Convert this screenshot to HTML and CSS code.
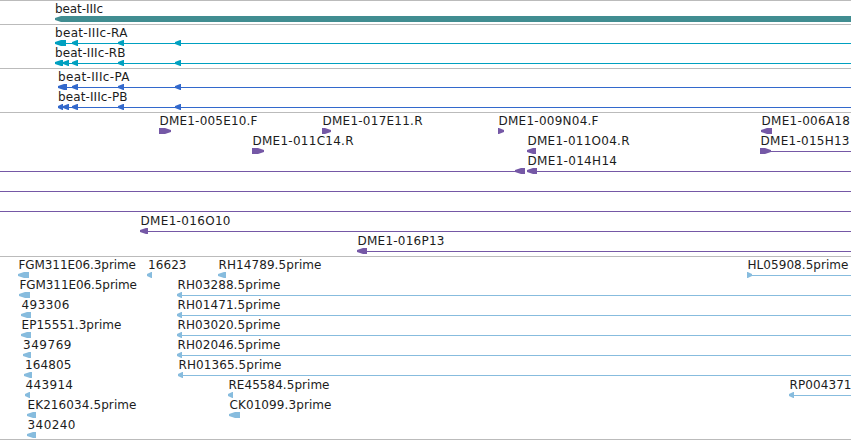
FILE: index.html
```
<!DOCTYPE html>
<html lang="en">
<head>
<meta charset="utf-8">
<title>Genome browser</title>
<link rel="stylesheet" href="styles.css">
</head>
<body>
<main class="browser" id="browser"></main>
<script src="tracks.js"></script>
</body>
</html>
```
FILE: styles.css
```
body {
  margin: 0;
  background: #fff;
  overflow: hidden;
}

.browser {
  width: 851px;
  height: 439px;
  border-bottom: 1px solid #bbb;
}

.track {
  border-top: 1px solid #bbb;
  padding-top: 3px;
}

.row {
  display: block;
  width: 851px;
  height: 20px;
  overflow: visible;
}

.row text {
  font-family: "DejaVu Sans", sans-serif;
  font-size: 12px;
  fill: #1c1c1c;
}

.row rect,
.row polygon {
  fill: currentColor;
}

.row rect {
  shape-rendering: crispEdges;
}

.gene { color: #418d91; }
.transcript { color: #00a0c0; }
.protein { color: #3369cc; }
.clone { color: #7558a6; }
.est { color: #87bcde; }
```
FILE: tracks.js
```
// label: [text, inkStart, inkEnd]; line: [from, to]; arrow: [from, to, direction]
const exons = [[72, 78, -1], [118, 124, -1], [175, 181, -1]];
const tracks = [
  { kind: "gene", rows: [
    { labels: [["beat-IIIc", 55.5, 102.5]], arrows: [[55, 851, -1]] }
  ] },
  { kind: "transcript", rows: [
    { labels: [["beat-IIIc-RA", 55.5, 127]], lines: [[56, 851]], arrows: [[55, 66, -1], ...exons] },
    { labels: [["beat-IIIc-RB", 55.5, 125]], lines: [[56, 851]], arrows: [[55, 63, -1], [63, 69, -1], ...exons] }
  ] },
  { kind: "protein", rows: [
    { labels: [["beat-IIIc-PA", 58.5, 129]], lines: [[59, 851]], arrows: [[58, 67, -1], ...exons] },
    { labels: [["beat-IIIc-PB", 58.5, 127]], lines: [[59, 851]], arrows: [[58, 63, -1], [63, 69, -1], ...exons] }
  ] },
  { kind: "clone", rows: [
    { labels: [["DME1-005E10.F", 160, 257], ["DME1-017E11.R", 323, 422], ["DME1-009N04.F", 499, 598], ["DME1-006A18", 762, 849.5]],
      arrows: [[159, 171, 1], [322, 331, 1], [498, 504, 1], [761, 772, -1]] },
    { labels: [["DME1-011C14.R", 253, 353], ["DME1-011O04.R", 528, 629], ["DME1-015H13", 761, 849]],
      lines: [[765, 851]], arrows: [[252, 264, 1], [527, 536, -1], [760, 771, 1]] },
    { labels: [["DME1-014H14", 528, 616.5]], lines: [[0, 525], [528, 851]], arrows: [[515, 525, -1], [527, 537, -1]] },
    { lines: [[0, 851]] },
    { lines: [[0, 851]] },
    { labels: [["DME1-016O10", 141, 230]], lines: [[142, 851]], arrows: [[140, 148, -1]] },
    { labels: [["DME1-016P13", 358, 444]], lines: [[360, 851]], arrows: [[357, 367, -1]] }
  ] },
  { kind: "est", rows: [
    { labels: [["FGM311E06.3prime", 19, 135.5], ["16623", 148.5, 186], ["RH14789.5prime", 219, 321], ["HL05908.5prime", 748, 848]],
      lines: [[748, 851]], arrows: [[18, 29, -1], [147, 152, -1], [218, 226, -1], [747, 752, 1]] },
    { labels: [["FGM311E06.5prime", 20, 136.5], ["RH03288.5prime", 178, 280]], lines: [[178, 851]], arrows: [[19, 30, -1], [177, 182, -1]] },
    { labels: [["493306", 22, 69], ["RH01471.5prime", 178, 280]], lines: [[178, 851]], arrows: [[21, 31, -1], [177, 182, -1]] },
    { labels: [["EP15551.3prime", 22, 121], ["RH03020.5prime", 178, 280]], lines: [[178, 851]], arrows: [[21, 31, -1], [177, 182, -1]] },
    { labels: [["349769", 23.5, 71], ["RH02046.5prime", 178, 280]], lines: [[178, 851]], arrows: [[23, 31, -1], [177, 182, -1]] },
    { labels: [["164805", 25.5, 71], ["RH01365.5prime", 179, 281]], lines: [[179, 851]], arrows: [[24, 32, -1], [178, 183, -1]] },
    { labels: [["443914", 26, 72.5], ["RE45584.5prime", 229, 329], ["RP004371", 790, 851]], lines: [[790, 851]], arrows: [[25, 30, -1], [228, 233, -1], [789, 794, -1]] },
    { labels: [["EK216034.5prime", 28, 136], ["CK01099.3prime", 230, 331]], arrows: [[27, 36, -1], [229, 240, -1]] },
    { labels: [["340240", 28, 75]], arrows: [[27, 36, -1]] }
  ] }
];

function label([text, from, to]) {
  return `<text x="${from - 0.5}" y="9" textLength="${to - from + 1}">${text}</text>`;
}

function line([from, to]) {
  return `<rect x="${from}" y="15" width="${to - from}" height="1"/>`;
}

function arrow([from, to, direction]) {
  const head = Math.min((to - from) * 0.85, 6);
  const tip = direction < 0 ? from : to;
  const back = direction < 0 ? to : from;
  const neck = tip - direction * head;
  return `<polygon points="${tip},14 ${tip},16 ${neck},18 ${back},18 ${back},12 ${neck},12"/>`;
}

document.getElementById("browser").innerHTML = tracks.map(track => {
  const rows = track.rows.map(row =>
    `<svg class="row ${track.kind}">${(row.lines || []).map(line).join("")}${(row.arrows || []).map(arrow).join("")}${(row.labels || []).map(label).join("")}</svg>`
  ).join("");
  return `<section class="track">${rows}</section>`;
}).join("");
```
